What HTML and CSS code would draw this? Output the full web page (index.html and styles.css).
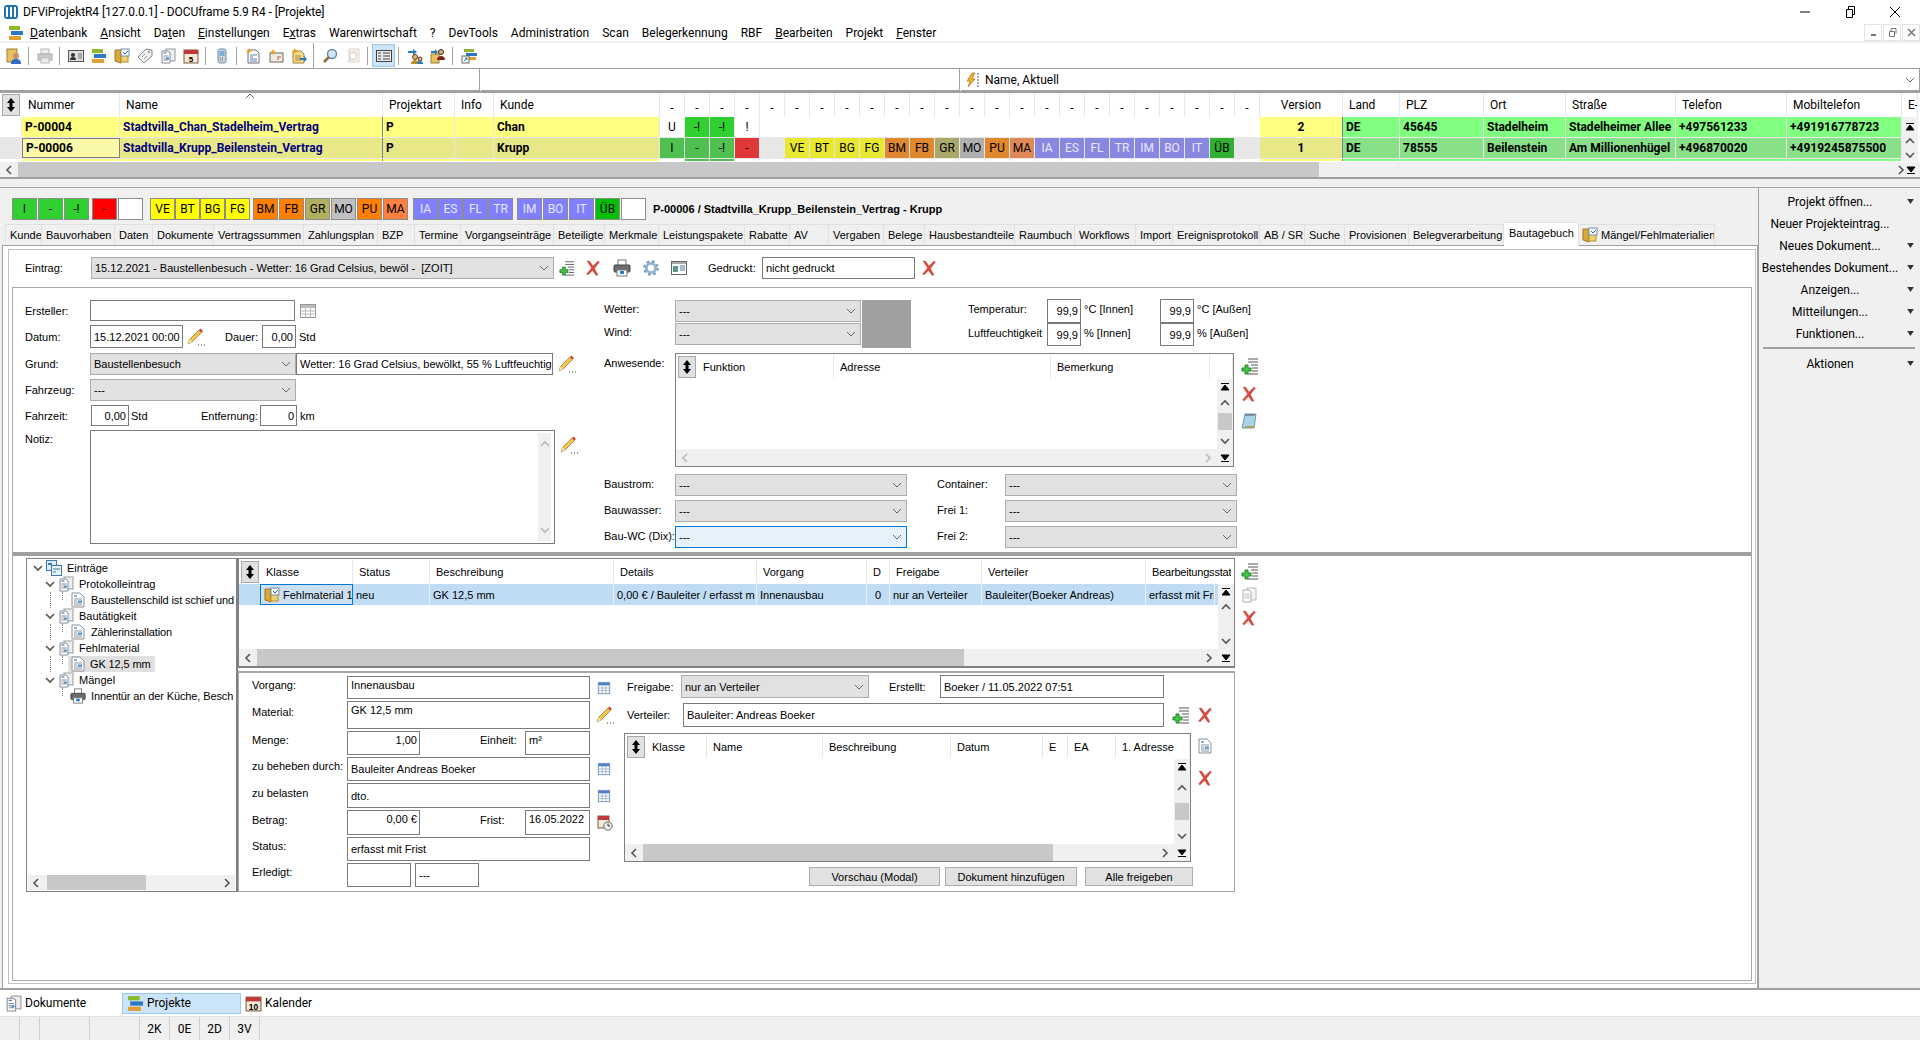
FILE: index.html
```html
<!DOCTYPE html>
<html lang="de">
<head>
<meta charset="UTF-8">
<title>DFViProjektR4 - DOCUframe 5.9 R4</title>
<link rel="stylesheet" href="styles.css">
</head>
<body>
<svg class="defs" xmlns="http://www.w3.org/2000/svg">
  <symbol id="i-app" viewBox="0 0 16 16"><rect x="1" y="1" width="14" height="14" rx="3" fill="#1f6fb5"/><path d="M4 3v10M8 3v10M12 3v10" stroke="#fff" stroke-width="2"/></symbol>
  <symbol id="i-projects" viewBox="0 0 16 16"><rect x="1" y="1" width="11" height="4" fill="#8cb82c"/><rect x="3" y="6" width="12" height="4" fill="#2a78c0"/><rect x="1" y="11" width="12" height="4" fill="#e0a030"/></symbol>
  <symbol id="i-projarrow" viewBox="0 0 16 16"><rect x="3" y="1" width="10" height="3" fill="#8cb82c"/><rect x="5" y="5" width="11" height="3" fill="#2a78c0"/><rect x="7" y="9" width="8" height="3" fill="#e0a030"/><rect x="1" y="8" width="7" height="7" fill="#fff" stroke="#666"/><path d="M3 13l3-3M4 10h2v2" stroke="#2a78c0" fill="none"/></symbol>
  <symbol id="i-userdoc" viewBox="0 0 16 16"><rect x="1" y="1" width="10" height="13" fill="#e8c060" stroke="#a08040"/><circle cx="10" cy="8" r="3" fill="#c89070"/><path d="M5 16c0-4 2-5 5-5s5 1 5 5z" fill="#3070c0"/></symbol>
  <symbol id="i-print-off" viewBox="0 0 16 16"><rect x="4" y="1" width="8" height="5" fill="#eee" stroke="#bbb"/><rect x="1" y="6" width="14" height="6" fill="#ccc" stroke="#aaa"/><rect x="4" y="10" width="8" height="5" fill="#eee" stroke="#bbb"/></symbol>
  <symbol id="i-card" viewBox="0 0 16 16"><rect x=".5" y="2.500" width="15" height="11" fill="#ddd" stroke="#555"/><circle cx="5" cy="7" r="2" fill="#333"/><path d="M2 12c0-2 1-3 3-3s3 1 3 3z" fill="#333"/><path d="M10 6h4M10 8h4M10 10h4" stroke="#777"/></symbol>
  <symbol id="i-folder" viewBox="0 0 16 16"><path d="M1 2h6v13l-6-2z" fill="#d8a838" stroke="#a07820"/><rect x="7" y="3" width="7" height="11" fill="#f0d070" stroke="#b89030"/><rect x="7" y="1" width="8" height="7" fill="#fff" stroke="#7090b0"/><path d="M9 4l2 2 3-3" stroke="#2060c0" fill="none"/></symbol>
  <symbol id="i-tag" viewBox="0 0 16 16"><path d="M1 9l8-8 6 1 0 6-8 7z" fill="#eee" stroke="#888"/><circle cx="12" cy="4" r="1" fill="#888"/><path d="M5 9l3-3M7 11l3-3" stroke="#999"/></symbol>
  <symbol id="i-docs" viewBox="0 0 16 16"><rect x="6" y="1" width="9" height="12" fill="#eee" stroke="#999"/><path d="M2 3h6l2 2v10H2z" fill="#fff" stroke="#889"/><path d="M3.500 5h3" stroke="#26a"/><path d="M3.500 8h5M3.500 10h2M3.500 12h5" stroke="#889"/><rect x="6" y="9.500" width="3" height="2" fill="#4a90d0"/></symbol>
  <symbol id="i-doc" viewBox="0 0 16 16"><path d="M2 1h8l4 4v10H2z" fill="#fff" stroke="#8a8f98"/><path d="M4 4h3" stroke="#26a"/><path d="M4 7h8M4 9h3M4 11h8M4 13h8" stroke="#8a95a0"/><rect x="8" y="8.500" width="4" height="2" fill="#4a90d0"/></symbol>
  <symbol id="i-docs-off" viewBox="0 0 16 16"><rect x="6" y="1" width="9" height="12" fill="#f4f4f4" stroke="#bbb"/><path d="M2 3h6l2 2v10H2z" fill="#fff" stroke="#aaa"/><path d="M3.500 7h5M3.500 9h5M3.500 11h5" stroke="#bbb"/></symbol>
  <symbol id="i-cal" viewBox="0 0 16 16"><rect x="1" y="2" width="14" height="13" fill="#f4ead8" stroke="#7a5a38"/><rect x="1" y="2" width="14" height="4" fill="#c0383a"/><text x="8" y="14" font-size="8" font-weight="700" text-anchor="middle" font-family="Liberation Sans">5</text></symbol>
  <symbol id="i-cal10" viewBox="0 0 16 16"><rect x="1" y="2" width="14" height="13" fill="#f4ead8" stroke="#7a5a38"/><rect x="1" y="2" width="14" height="4" fill="#c0383a"/><text x="8" y="14" font-size="8" font-weight="700" text-anchor="middle" font-family="Liberation Sans">10</text></symbol>
  <symbol id="i-phone" viewBox="0 0 16 16"><rect x="4" y="1" width="8" height="14" rx="2" fill="#c8d4e0" stroke="#7a8a9a"/><rect x="5.500" y="3" width="5" height="5" fill="#7ab0e0"/><path d="M6 10h4M6 12h4" stroke="#667" stroke-dasharray="1 1"/></symbol>
  <symbol id="i-docstar" viewBox="0 0 16 16"><path d="M3 2h8l3 3v10H3z" fill="#fff" stroke="#6a6f78"/><path d="M5 7h7M5 9h3M5 11h7M5 13h7" stroke="#5a85b0"/><path d="M4 0l1 2 2 1-2 1-1 2-1-2-2-1 2-1z" fill="#f0a020"/></symbol>
  <symbol id="i-mailstar" viewBox="0 0 16 16"><rect x="2" y="5" width="13" height="9" fill="#f0ece0" stroke="#6a6a60"/><path d="M9 9h4M9 11h2" stroke="#c05050"/><path d="M5 1l1 2 2 1-2 1-1 2-1-2-2-1 2-1z" fill="#f0a020"/></symbol>
  <symbol id="i-notestar" viewBox="0 0 16 16"><path d="M2 3h8l3 3v9H2z" fill="#f8e090" stroke="#a08030"/><path d="M4 8h6M4 10h6M4 12h6" stroke="#a08030"/><path d="M9 10h4V8l3 3-3 3v-2H9z" fill="#2a78c0"/><path d="M4 0l1 2 2 1-2 1-1 2-1-2-2-1 2-1z" fill="#f0a020"/></symbol>
  <symbol id="i-search" viewBox="0 0 16 16"><circle cx="10" cy="6" r="4.500" fill="#cfe4f7" stroke="#6a8aa8" stroke-width="1.500"/><path d="M7 9l-5 5" stroke="#8a6a3a" stroke-width="2.500"/></symbol>
  <symbol id="i-search-off" viewBox="0 0 16 16"><rect x="4" y="1" width="10" height="13" fill="#f6eedd" stroke="#e0d8c8"/><circle cx="8" cy="8" r="3.500" fill="#fff" stroke="#ccc"/><path d="M6 11l-3 3" stroke="#ddd" stroke-width="2"/></symbol>
  <symbol id="i-window" viewBox="0 0 16 16"><rect x=".5" y="1.500" width="15" height="13" fill="#fff" stroke="#666"/><rect x="1" y="2" width="14" height="2" fill="#aaa"/><rect x="2" y="6" width="5" height="6" fill="#5a9a8a"/><path d="M9 6h5M9 8h5M9 10h5" stroke="#4a7aa0"/></symbol>
  <symbol id="i-form" viewBox="0 0 16 16"><rect x=".5" y="2.500" width="15" height="11" fill="#e8e8e8" stroke="#444"/><path d="M2 5h3M2 8h3M2 11h3" stroke="#444"/><path d="M7 5h7M7 8h7M7 11h7" stroke="#444"/></symbol>
  <symbol id="i-users" viewBox="0 0 16 16"><path d="M1 3h5V1l4 3-4 3V5H1z" fill="#2a78c0"/><circle cx="8" cy="9" r="2.500" fill="#e0b080" stroke="#604020"/><path d="M4 16c0-3 2-4 4-4s4 1 4 4z" fill="#c09030"/><circle cx="13" cy="11" r="2" fill="#e0b080" stroke="#604020"/><path d="M10 16c0-2 1-3 3-3s3 1 3 3z" fill="#2a78c0"/></symbol>
  <symbol id="i-users2" viewBox="0 0 16 16"><rect x="1" y="6" width="8" height="9" fill="#e8c060" stroke="#a08030"/><path d="M1 3h4V1l3 3-3 3V5H1z" fill="#2a78c0"/><circle cx="11" cy="4" r="2.500" fill="#e0b080" stroke="#402010"/><path d="M7 12c0-3 2-4 4-4s4 1 4 4z" fill="#802020"/></symbol>
  <symbol id="i-plist" viewBox="0 0 18 18"><path d="M7 2h10M7 5h10M10 8h7M11 11h6M11 14h6M7 17h10" stroke="#555"/><path d="M4 8h3v3h3v3H7v3H4v-3H1v-3h3z" fill="#4cc04c" stroke="#1c8a1c"/></symbol>
  <symbol id="i-x" viewBox="0 0 16 16"><path d="M2 1h2.500L8 6l5-5 1.500 1-5 6.500L13 15l-2 .5-3.500-5L3 15l-1.500-1 5-6z" fill="#d8483c" stroke="#b84038" stroke-width=".3"/></symbol>
  <symbol id="i-print" viewBox="0 0 18 18"><rect x="5" y="1" width="8" height="6" fill="#fff" stroke="#777"/><rect x="1" y="6" width="16" height="7" rx="1" fill="#6c6c70" stroke="#444"/><rect x="4" y="11" width="10" height="6" fill="#fff" stroke="#777"/><rect x="7" y="12" width="4" height="3" fill="#3080c0"/></symbol>
  <symbol id="i-gear" viewBox="0 0 16 16"><circle cx="8" cy="8" r="6.300" fill="none" stroke="#7898b8" stroke-width="3" stroke-dasharray="2.500 2.450"/><circle cx="8" cy="8" r="4.600" fill="none" stroke="#94b4d0" stroke-width="2.800"/><circle cx="8" cy="8" r="2.200" fill="#fff"/></symbol>
  <symbol id="i-pencil" viewBox="0 0 18 18"><path d="M1 16l1.500-4.500L12 2l2.500 2.500L5 14z" fill="#f0c850" stroke="#8a6a20" stroke-width=".7"/><path d="M12 2l2.500 2.500L16 3l-2.500-2.500z" fill="#d04040"/><path d="M1 16l1.500-4.500L5 14z" fill="#f4e4c0"/><path d="M11 17h1M14 17h1M17 17h1" stroke="#333"/></symbol>
  <symbol id="i-grid" viewBox="0 0 16 16"><rect x=".5" y="1.500" width="15" height="13" fill="#fff" stroke="#999"/><rect x="1" y="2" width="14" height="3" fill="#bbb"/><path d="M1 8h14M1 11h14M5.500 5v9M10.500 5v9" stroke="#bbb"/></symbol>
  <symbol id="i-gridb" viewBox="0 0 16 16"><rect x="1.500" y="1.500" width="13" height="13" fill="#fff" stroke="#6a8ab0"/><rect x="2" y="2" width="12" height="3" fill="#4a80c8"/><path d="M2 8h12M2 11h12M6 5v9M10 5v9" stroke="#9ab4d0"/></symbol>
  <symbol id="i-calclock" viewBox="0 0 16 16"><rect x="1" y="1" width="11" height="12" fill="#f4ead8" stroke="#7a5a38"/><rect x="1" y="1" width="11" height="4" fill="#c0383a"/><circle cx="11" cy="11" r="4.200" fill="#eee" stroke="#666"/><path d="M11 8.500V11h2" stroke="#333" fill="none"/></symbol>
  <symbol id="i-note" viewBox="0 0 16 16"><path d="M4 1h11l-2 14H1z" fill="#a8d4e8" stroke="#6a9ab0"/><path d="M5 1v2M7 1v2M9 1v2M11 1v2M13 1v2" stroke="#556"/><path d="M4 14h9" stroke="#b0a060" stroke-width="2"/></symbol>
  <symbol id="i-root" viewBox="0 0 16 16"><rect x=".5" y=".5" width="10" height="10" fill="#dce8f4" stroke="#3a7ab0"/><rect x="5.500" y="5.500" width="10" height="10" fill="#e8f0f8" stroke="#3a7ab0"/><path d="M7 9h7M7 12h3" stroke="#3a7ab0"/><rect x="2" y="3" width="4" height="2" fill="#3a7ab0"/></symbol>
  <symbol id="i-sort" viewBox="0 0 10 14"><path d="M5 0l4 5H6.500v4H9l-4 5-4-5h2.500V5H1z" fill="#000"/></symbol>
  <symbol id="i-first" viewBox="0 0 10 10"><path d="M1 1.500h8M5 3l4 5H1z" stroke="#000" stroke-width="1"/></symbol>
  <symbol id="i-last" viewBox="0 0 10 10"><path d="M1 8.500h8M5 7L1 2h8z" stroke="#000" stroke-width="1"/></symbol>
  <symbol id="i-cdown" viewBox="0 0 10 6"><path d="M1 1l4 4 4-4" fill="none" stroke="#666" stroke-width="1"/></symbol>
  <symbol id="i-sup" viewBox="0 0 10 10"><path d="M1 7l4-4 4 4" fill="none" stroke="#555" stroke-width="1.600"/></symbol>
  <symbol id="i-sdown" viewBox="0 0 10 10"><path d="M1 3l4 4 4-4" fill="none" stroke="#555" stroke-width="1.600"/></symbol>
  <symbol id="i-sleft" viewBox="0 0 10 10"><path d="M7 1L3 5l4 4" fill="none" stroke="#555" stroke-width="1.600"/></symbol>
  <symbol id="i-sright" viewBox="0 0 10 10"><path d="M3 1l4 4-4 4" fill="none" stroke="#555" stroke-width="1.600"/></symbol>
  <symbol id="i-tri" viewBox="0 0 8 6"><path d="M0 0h8L4 6z" fill="#333"/></symbol>
  <symbol id="i-bolt" viewBox="0 0 16 16"><path d="M8 1L3 9h3l-2 6 7-8H8l3-6z" fill="#f0b030" stroke="#b06010" stroke-width=".6"/><path d="M13 2h2M13 5h2M13 8h2M13 11h2M13 14h2" stroke="#555"/></symbol>
</svg>

<header class="titlebar">
  <svg class="ico16"><use href="#i-app"/></svg>
  <span class="titlebar-text">DFViProjektR4 [127.0.0.1] - DOCUframe 5.9 R4 - [Projekte]</span>
  <div class="winbtns">
    <svg width="12" height="12" viewBox="0 0 12 12"><path d="M1 6h10" stroke="#000"/></svg>
    <svg width="12" height="12" viewBox="0 0 12 12"><path d="M2.500 3.500h6v8h-6zM4.500 3V.500h6v8H9" fill="none" stroke="#000"/></svg>
    <svg width="12" height="12" viewBox="0 0 12 12"><path d="M1 1l10 10M11 1L1 11" stroke="#000"/></svg>
  </div>
</header>

<nav class="menubar">
  <svg class="ico16"><use href="#i-projects"/></svg>
  <div class="menu-items">
    <span><u>D</u>atenbank</span><span><u>A</u>nsicht</span><span>Da<u>t</u>en</span><span><u>E</u>instellungen</span><span>E<u>x</u>tras</span><span>Warenwirtschaft</span><span>?</span><span>DevTools</span><span>Administration</span><span>Scan</span><span>Belegerkennung</span><span>RBF</span><span><u>B</u>earbeiten</span><span>Pro<u>j</u>ekt</span><span><u>F</u>enster</span>
  </div>
  <div class="mdibtns">
    <span class="mdibtn"><svg width="9" height="9" viewBox="0 0 9 9"><path d="M2 7h5" stroke="#777" stroke-width="2"/></svg></span>
    <span class="mdibtn"><svg width="9" height="9" viewBox="0 0 9 9"><path d="M1.500 3.500h5v5h-5zM3 3V.500h5v5" fill="none" stroke="#777"/></svg></span>
    <span class="mdibtn"><svg width="9" height="9" viewBox="0 0 9 9"><path d="M1 1l7 7M8 1L1 8" stroke="#777" stroke-width="1.500"/></svg></span>
  </div>
</nav>

<div class="toolbar">
  <span class="tb"><svg class="ico16"><use href="#i-userdoc"/></svg></span><i class="tsep"></i>
  <span class="tb"><svg class="ico16"><use href="#i-print-off"/></svg></span><i class="tsep"></i>
  <span class="tb"><svg class="ico16"><use href="#i-card"/></svg></span>
  <span class="tb"><svg class="ico16"><use href="#i-projects"/></svg></span>
  <span class="tb"><svg class="ico16"><use href="#i-folder"/></svg></span>
  <span class="tb"><svg class="ico16"><use href="#i-tag"/></svg></span>
  <span class="tb"><svg class="ico16"><use href="#i-docs"/></svg></span>
  <span class="tb"><svg class="ico16"><use href="#i-cal"/></svg></span><i class="tsep"></i>
  <span class="tb"><svg class="ico16"><use href="#i-phone"/></svg></span><i class="tsep"></i>
  <span class="tb"><svg class="ico16"><use href="#i-docstar"/></svg></span>
  <span class="tb"><svg class="ico16"><use href="#i-mailstar"/></svg></span>
  <span class="tb"><svg class="ico16"><use href="#i-notestar"/></svg></span><i class="tsep tall"></i>
  <span class="tb"><svg class="ico16"><use href="#i-search"/></svg></span>
  <span class="tb"><svg class="ico16"><use href="#i-search-off"/></svg></span><i class="tsep"></i>
  <span class="tb on"><svg class="ico16"><use href="#i-form"/></svg></span><i class="tsep"></i>
  <span class="tb"><svg class="ico16"><use href="#i-users"/></svg></span>
  <span class="tb"><svg class="ico16"><use href="#i-users2"/></svg></span><i class="tsep"></i>
  <span class="tb"><svg class="ico16"><use href="#i-projarrow"/></svg></span>
</div>

<div class="filters">
  <div class="filter f1"></div>
  <div class="filter f2"></div>
  <div class="filter f3">
    <svg class="ico16"><use href="#i-bolt"/></svg>
    <span>Name, Aktuell</span>
    <svg class="chev"><use href="#i-cdown"/></svg>
  </div>
</div>

<!-- Projektliste -->
<section class="plist">
  <div class="prow phead">
    <div class="pc"><button class="sortbtn"><svg width="10" height="14"><use href="#i-sort"/></svg></button></div>
    <div class="pc">Nummer</div>
    <div class="pc sorted">Name<svg class="sortmark" width="10" height="6" viewBox="0 0 10 6"><path d="M1 5l4-4 4 4" fill="none" stroke="#666"/></svg></div>
    <div class="pc">Projektart</div><div class="pc">Info</div><div class="pc">Kunde</div>
    <div class="pc d">-</div><div class="pc d">-</div><div class="pc d">-</div><div class="pc d">-</div><div class="pc d">-</div><div class="pc d">-</div>
    <div class="pc d">-</div><div class="pc d">-</div><div class="pc d">-</div><div class="pc d">-</div><div class="pc d">-</div><div class="pc d">-</div>
    <div class="pc d">-</div><div class="pc d">-</div><div class="pc d">-</div><div class="pc d">-</div><div class="pc d">-</div><div class="pc d">-</div>
    <div class="pc d">-</div><div class="pc d">-</div><div class="pc d">-</div><div class="pc d">-</div><div class="pc d">-</div><div class="pc d">-</div>
    <div class="pc mid">Version</div><div class="pc">Land</div><div class="pc">PLZ</div><div class="pc">Ort</div><div class="pc">Straße</div><div class="pc">Telefon</div><div class="pc">Mobiltelefon</div><div class="pc">E-</div>
  </div>
  <div class="plist-body">
    <div class="plist-rows">
      <div class="prow pdata">
        <div class="pc"></div>
        <div class="pc yel">P-00004</div><div class="pc yel navy line-r">Stadtvilla_Chan_Stadelheim_Vertrag</div><div class="pc yel">P</div><div class="pc yel"></div><div class="pc yel">Chan</div>
        <div class="pc st">U</div><div class="pc st s-g2">-!</div><div class="pc st s-g2">-!</div><div class="pc st">!</div>
        <div class="pc st"></div><div class="pc st"></div><div class="pc st"></div><div class="pc st"></div><div class="pc st"></div><div class="pc st"></div><div class="pc st"></div><div class="pc st"></div><div class="pc st"></div><div class="pc st"></div><div class="pc st"></div><div class="pc st"></div><div class="pc st"></div><div class="pc st"></div><div class="pc st"></div><div class="pc st"></div><div class="pc st"></div><div class="pc st"></div><div class="pc st"></div><div class="pc st"></div>
        <div class="pc yel mid line-r">2</div><div class="pc grn">DE</div><div class="pc grn">45645</div><div class="pc grn">Stadelheim</div><div class="pc grn">Stadelheimer Allee</div><div class="pc grn">+497561233</div><div class="pc grn">+491916778723</div>
      </div>
      <div class="prow pdata cur">
        <div class="pc rh"></div>
        <div class="pc focus">P-00006</div><div class="pc yel navy line-r">Stadtvilla_Krupp_Beilenstein_Vertrag</div><div class="pc yel">P</div><div class="pc yel"></div><div class="pc yel">Krupp</div>
        <div class="pc st s-g">I</div><div class="pc st s-g">-</div><div class="pc st s-g">-!</div><div class="pc st s-r">-</div><div class="pc st s-e"></div>
        <div class="pc st t-y">VE</div><div class="pc st t-y">BT</div><div class="pc st t-y">BG</div><div class="pc st t-y">FG</div><div class="pc st t-o">BM</div><div class="pc st t-o">FB</div><div class="pc st t-k">GR</div><div class="pc st t-s">MO</div><div class="pc st t-o">PU</div><div class="pc st t-m">MA</div><div class="pc st t-b">IA</div><div class="pc st t-b">ES</div><div class="pc st t-b">FL</div><div class="pc st t-b">TR</div><div class="pc st t-b">IM</div><div class="pc st t-b">BO</div><div class="pc st t-b">IT</div><div class="pc st t-u">ÜB</div><div class="pc st s-e"></div>
        <div class="pc yel mid line-r">1</div><div class="pc grn">DE</div><div class="pc grn">78555</div><div class="pc grn">Beilenstein</div><div class="pc grn">Am Millionenhügel</div><div class="pc grn">+496870020</div><div class="pc grn">+4919245875500</div>
      </div>
      <div class="prow psliver">
        <div class="pc"></div><div class="pc yel"></div><div class="pc yel line-r"></div><div class="pc yel"></div><div class="pc yel"></div><div class="pc yel"></div>
        <div class="pc"></div><div class="pc s-g"></div><div class="pc s-g"></div><div class="pc"></div>
        <div class="pc"></div><div class="pc"></div><div class="pc"></div><div class="pc"></div><div class="pc"></div><div class="pc"></div><div class="pc"></div><div class="pc"></div><div class="pc"></div><div class="pc"></div><div class="pc"></div><div class="pc"></div><div class="pc"></div><div class="pc"></div><div class="pc"></div><div class="pc"></div><div class="pc"></div><div class="pc"></div><div class="pc"></div><div class="pc"></div>
        <div class="pc yel line-r"></div><div class="pc grn"></div><div class="pc grn"></div><div class="pc grn"></div><div class="pc grn"></div><div class="pc grn"></div><div class="pc grn"></div>
      </div>
    </div>
    <div class="plist-vs">
      <svg class="sico"><use href="#i-first"/></svg>
      <svg class="sico"><use href="#i-sup"/></svg>
      <svg class="sico"><use href="#i-sdown"/></svg>
    </div>
  </div>
  <div class="hscroll plist-hs">
    <svg class="sico"><use href="#i-sleft"/></svg>
    <div class="track"><i class="thumb th-p"></i></div>
    <svg class="sico"><use href="#i-sright"/></svg>
    <svg class="sico"><use href="#i-last"/></svg>
  </div>
</section>
<div class="gap-strip"></div>

<div class="workspace">
  <main class="content">
    <div class="tagbar">
      <div class="tags g1"><span class="tag c-g">I</span><span class="tag c-g">-</span><span class="tag c-g">-!</span></div>
      <div class="tags g1 m3"><span class="tag c-r">-</span><span class="tag"></span></div>
      <div class="tags m7"><span class="tag c-y">VE</span><span class="tag c-y">BT</span><span class="tag c-y">BG</span><span class="tag c-y">FG</span></div>
      <div class="tags g1 m3"><span class="tag c-o">BM</span><span class="tag c-o">FB</span><span class="tag c-k">GR</span><span class="tag c-s">MO</span><span class="tag c-o">PU</span><span class="tag c-m">MA</span></div>
      <div class="tags m5"><span class="tag c-b">IA</span><span class="tag c-b">ES</span><span class="tag c-b">FL</span><span class="tag c-b">TR</span></div>
      <div class="tags g1 m4"><span class="tag c-b">IM</span><span class="tag c-b">BO</span><span class="tag c-b">IT</span><span class="tag c-u">ÜB</span><span class="tag"></span></div>
      <b class="proj-title">P-00006 / Stadtvilla_Krupp_Beilenstein_Vertrag - Krupp</b>
    </div>

    <div class="tabs">
      <span class="tab">Kunde</span><span class="tab">Bauvorhaben</span><span class="tab">Daten</span><span class="tab">Dokumente</span><span class="tab">Vertragssummen</span><span class="tab">Zahlungsplan</span><span class="tab">BZP</span><span class="tab">Termine</span><span class="tab">Vorgangseinträge</span><span class="tab">Beteiligte</span><span class="tab">Merkmale</span><span class="tab">Leistungspakete</span><span class="tab">Rabatte</span><span class="tab">AV</span><span class="tab">Vergaben</span><span class="tab">Belege</span><span class="tab">Hausbestandteile</span><span class="tab">Raumbuch</span><span class="tab">Workflows</span><span class="tab">Import</span><span class="tab">Ereignisprotokoll</span><span class="tab">AB / SR</span><span class="tab">Suche</span><span class="tab">Provisionen</span><span class="tab">Belegverarbeitung</span><span class="tab active">Bautagebuch</span><span class="tab tab-icon"><svg class="ico16"><use href="#i-folder"/></svg>Mängel/Fehlmaterialien</span>
    </div>

    <div class="tabpane">
      <div class="page">
        <div class="entry-row">
          <label class="lb w-66">Eintrag:</label>
          <div class="sel w-463"><span>15.12.2021 - Baustellenbesuch - Wetter: 16 Grad Celsius, bewöl -&nbsp; [ZOIT]</span><svg class="chev"><use href="#i-cdown"/></svg></div>
          <svg class="ico16 ml-5"><use href="#i-plist"/></svg>
          <svg class="ico16 ml-10"><use href="#i-x"/></svg>
          <svg class="ico18 ml-12"><use href="#i-print"/></svg>
          <svg class="ico16 ml-12"><use href="#i-gear"/></svg>
          <svg class="ico16 ml-12"><use href="#i-window"/></svg>
          <label class="lb w-54 ml-21">Gedruckt:</label>
          <div class="tf w-153">nicht gedruckt</div>
          <svg class="ico16 ml-6"><use href="#i-x"/></svg>
        </div>

        <div class="inner">
          <div class="top-form">
            <!-- linke Spalte -->
            <div class="col-left">
              <div class="frow h21"><label class="lb w-65">Ersteller:</label><div class="tf w-205"></div><svg class="ico16 ml-5"><use href="#i-grid"/></svg></div>
              <div class="frow h23"><label class="lb w-65">Datum:</label><div class="tf w-93">15.12.2021 00:00</div><svg class="ico18 ml-4"><use href="#i-pencil"/></svg><label class="lb w-37 ml-20">Dauer:</label><div class="tf w-34 right">0,00</div><span class="lb ml-3">Std</span></div>
              <div class="frow h22 mt-5"><label class="lb w-65">Grund:</label><div class="sel w-206"><span>Baustellenbesuch</span><svg class="chev"><use href="#i-cdown"/></svg></div><div class="tf w-257">Wetter: 16 Grad Celsius, bewölkt, 55 % Luftfeuchtig</div><svg class="ico18 ml-5"><use href="#i-pencil"/></svg></div>
              <div class="frow h22"><label class="lb w-65">Fahrzeug:</label><div class="sel w-206"><span>---</span><svg class="chev"><use href="#i-cdown"/></svg></div></div>
              <div class="frow h21"><label class="lb w-66">Fahrzeit:</label><div class="tf w-38 right">0,00</div><span class="lb w-70 ml-2">Std</span><label class="lb w-59">Entfernung:</label><div class="tf w-37 right">0</div><span class="lb ml-3">km</span></div>
              <div class="frow h114 notiz"><label class="lb w-65">Notiz:</label>
                <div class="tf w-465 area"><div class="area-vs"><svg class="sico dim"><use href="#i-sup"/></svg><svg class="sico dim"><use href="#i-sdown"/></svg></div></div>
                <svg class="ico18 ml-5 pencil-top"><use href="#i-pencil"/></svg>
              </div>
            </div>

            <!-- rechte Spalte -->
            <div class="col-right">
              <div class="wx-row">
                <div class="wx-grid">
                  <label class="lb">Wetter:</label><div class="sel"><span>---</span><svg class="chev"><use href="#i-cdown"/></svg></div>
                  <div class="wx-box"></div>
                  <label class="lb">Wind:</label><div class="sel"><span>---</span><svg class="chev"><use href="#i-cdown"/></svg></div>
                </div>
                <div class="climate">
                  <label class="lb">Temperatur:</label><div class="tf right">99,9</div><span class="lb">°C [Innen]</span><div class="tf right">99,9</div><span class="lb">°C [Außen]</span>
                  <label class="lb">Luftfeuchtigkeit</label><div class="tf right">99,9</div><span class="lb">% [Innen]</span><div class="tf right">99,9</div><span class="lb">% [Außen]</span>
                </div>
              </div>

              <div class="anw-row">
                <label class="lb w-71 anw-label">Anwesende:</label>
                <div class="dg dg-anw">
                  <div class="dg-head hd-anw">
                    <div class="hc"><button class="sortbtn"><svg width="10" height="14"><use href="#i-sort"/></svg></button><span>Funktion</span></div>
                    <div class="hc">Adresse</div><div class="hc">Bemerkung</div><div class="hc"></div>
                  </div>
                  <div class="dg-body"></div>
                  <div class="vscroll">
                    <svg class="sico"><use href="#i-first"/></svg>
                    <svg class="sico"><use href="#i-sup"/></svg>
                    <i class="vthumb"></i>
                    <svg class="sico"><use href="#i-sdown"/></svg>
                  </div>
                  <div class="hscroll">
                    <svg class="sico dim"><use href="#i-sleft"/></svg>
                    <div class="track"></div>
                    <svg class="sico dim"><use href="#i-sright"/></svg>
                  </div>
                  <div class="corner"><svg class="sico"><use href="#i-last"/></svg></div>
                </div>
                <div class="side-icons si-anw">
                  <svg class="ico18"><use href="#i-plist"/></svg>
                  <svg class="ico16"><use href="#i-x"/></svg>
                  <svg class="ico16"><use href="#i-note"/></svg>
                </div>
              </div>

              <div class="site-grid">
                <label class="lb">Baustrom:</label><div class="sel"><span>---</span><svg class="chev"><use href="#i-cdown"/></svg></div><i></i>
                <label class="lb">Container:</label><div class="sel"><span>---</span><svg class="chev"><use href="#i-cdown"/></svg></div>
                <label class="lb">Bauwasser:</label><div class="sel"><span>---</span><svg class="chev"><use href="#i-cdown"/></svg></div><i></i>
                <label class="lb">Frei 1:</label><div class="sel"><span>---</span><svg class="chev"><use href="#i-cdown"/></svg></div>
                <label class="lb">Bau-WC (Dix):</label><div class="sel focus-sel"><span>---</span><svg class="chev"><use href="#i-cdown"/></svg></div><i></i>
                <label class="lb">Frei 2:</label><div class="sel"><span>---</span><svg class="chev"><use href="#i-cdown"/></svg></div>
              </div>
            </div>
          </div>

          <div class="splitter"></div>

          <div class="lower">
            <div class="tree">
              <div class="tree-rows">
                <div class="tr l0"><svg class="tw"><use href="#i-sdown"/></svg><svg class="ico16"><use href="#i-root"/></svg><span>Einträge</span></div>
                <div class="tr l1"><svg class="tw"><use href="#i-sdown"/></svg><svg class="ico16"><use href="#i-docs"/></svg><span>Protokolleintrag</span></div>
                <div class="tr l2"><i class="vl"></i><i class="hd"></i><svg class="ico16"><use href="#i-doc"/></svg><span>Baustellenschild ist schief und</span></div>
                <div class="tr l1"><svg class="tw"><use href="#i-sdown"/></svg><svg class="ico16"><use href="#i-docs"/></svg><span>Bautätigkeit</span></div>
                <div class="tr l2"><i class="vl"></i><i class="hd"></i><svg class="ico16"><use href="#i-doc"/></svg><span>Zählerinstallation</span></div>
                <div class="tr l1"><svg class="tw"><use href="#i-sdown"/></svg><svg class="ico16"><use href="#i-docs"/></svg><span>Fehlmaterial</span></div>
                <div class="tr l2"><i class="vl"></i><i class="hd"></i><span class="tree-sel"><svg class="ico16"><use href="#i-doc"/></svg><span>GK 12,5 mm</span></span></div>
                <div class="tr l1"><svg class="tw"><use href="#i-sdown"/></svg><svg class="ico16"><use href="#i-docs"/></svg><span>Mängel</span></div>
                <div class="tr l2 no-vl"><i class="vl"></i><i class="hd"></i><svg class="ico16"><use href="#i-print"/></svg><span>Innentür an der Küche, Besch</span></div>
              </div>
              <div class="hscroll tree-hs">
                <svg class="sico"><use href="#i-sleft"/></svg>
                <div class="track"><i class="thumb th-t"></i></div>
                <svg class="sico"><use href="#i-sright"/></svg>
              </div>
            </div>

            <div class="lower-main">
              <div class="dg dg-items">
                <div class="dg-head hd-items">
                  <div class="hc"><button class="sortbtn"><svg width="10" height="14"><use href="#i-sort"/></svg></button><span>Klasse</span></div>
                  <div class="hc">Status</div><div class="hc">Beschreibung</div><div class="hc">Details</div><div class="hc">Vorgang</div><div class="hc">D</div><div class="hc">Freigabe</div><div class="hc">Verteiler</div><div class="hc hc-tight">Bearbeitungsstat</div>
                </div>
                <div class="dg-body">
                  <div class="item-row hd-items">
                    <div class="ic klasse"><svg class="ico16"><use href="#i-folder"/></svg><span>Fehlmaterial 1</span></div>
                    <div class="ic">neu</div><div class="ic">GK 12,5 mm</div><div class="ic">0,00 € / Bauleiter / erfasst m</div><div class="ic">Innenausbau</div><div class="ic mid">0</div><div class="ic">nur an Verteiler</div><div class="ic">Bauleiter(Boeker Andreas)</div><div class="ic">erfasst mit Fri</div>
                  </div>
                </div>
                <div class="vscroll">
                  <svg class="sico"><use href="#i-first"/></svg>
                  <svg class="sico"><use href="#i-sup"/></svg>
                  <i class="vspace"></i>
                  <svg class="sico"><use href="#i-sdown"/></svg>
                </div>
                <div class="hscroll">
                  <svg class="sico"><use href="#i-sleft"/></svg>
                  <div class="track"><i class="thumb th-i"></i></div>
                  <svg class="sico"><use href="#i-sright"/></svg>
                </div>
                <div class="corner"><svg class="sico"><use href="#i-last"/></svg></div>
              </div>

              <div class="detail">
                <div class="detail-form">
                  <label class="lb">Vorgang:</label><div class="tf span4 top">Innenausbau</div><svg class="ico-grid ic-col"><use href="#i-gridb"/></svg>
                  <label class="lb">Material:</label><div class="tf span4 top">GK 12,5 mm</div><svg class="ico18 ic-col pen-col"><use href="#i-pencil"/></svg>
                  <label class="lb">Menge:</label><div class="tf right top">1,00</div><i></i><label class="lb">Einheit:</label><div class="tf top">m²</div><i></i>
                  <label class="lb">zu beheben durch:</label><div class="tf span4">Bauleiter Andreas Boeker</div><svg class="ico-grid ic-col"><use href="#i-gridb"/></svg>
                  <label class="lb">zu belasten</label><div class="tf span4">dto.</div><svg class="ico-grid ic-col"><use href="#i-gridb"/></svg>
                  <label class="lb">Betrag:</label><div class="tf right top">0,00 €</div><i></i><label class="lb">Frist:</label><div class="tf top">16.05.2022</div><svg class="ico16 ic-col"><use href="#i-calclock"/></svg>
                  <label class="lb">Status:</label><div class="tf span4">erfasst mit Frist</div><i></i>
                  <label class="lb">Erledigt:</label><div class="erledigt"><div class="tf"></div><div class="tf">---</div></div><i></i>
                </div>
                <div class="detail-right">
                  <div class="dr-row h23">
                    <label class="lb w-54 ml-3">Freigabe:</label>
                    <div class="sel w-188"><span>nur an Verteiler</span><svg class="chev"><use href="#i-cdown"/></svg></div>
                    <label class="lb w-51 ml-20">Erstellt:</label>
                    <div class="tf w-224">Boeker / 11.05.2022 07:51</div>
                  </div>
                  <div class="dr-row h24 dr-verteiler">
                    <label class="lb w-56 ml-3">Verteiler:</label>
                    <div class="tf w-481">Bauleiter: Andreas Boeker</div>
                    <svg class="ico18 ml-8"><use href="#i-plist"/></svg>
                    <svg class="ico16 ml-7"><use href="#i-x"/></svg>
                  </div>
                  <div class="dr-table">
                    <div class="dg dg-docs">
                      <div class="dg-head hd-docs">
                        <div class="hc"><button class="sortbtn"><svg width="10" height="14"><use href="#i-sort"/></svg></button><span>Klasse</span></div>
                        <div class="hc">Name</div><div class="hc">Beschreibung</div><div class="hc">Datum</div><div class="hc">E</div><div class="hc">EA</div><div class="hc">1. Adresse</div>
                      </div>
                      <div class="dg-body"></div>
                      <div class="vscroll">
                        <svg class="sico"><use href="#i-first"/></svg>
                        <svg class="sico"><use href="#i-sup"/></svg>
                        <i class="vthumb"></i>
                        <svg class="sico"><use href="#i-sdown"/></svg>
                      </div>
                      <div class="hscroll">
                        <svg class="sico"><use href="#i-sleft"/></svg>
                        <div class="track"><i class="thumb th-d"></i></div>
                        <svg class="sico"><use href="#i-sright"/></svg>
                      </div>
                      <div class="corner"><svg class="sico"><use href="#i-last"/></svg></div>
                    </div>
                    <div class="side-icons si-docs">
                      <svg class="ico16"><use href="#i-doc"/></svg>
                      <svg class="ico16"><use href="#i-x"/></svg>
                    </div>
                  </div>
                  <div class="dr-buttons">
                    <button class="btn w-131">Vorschau (Modal)</button>
                    <button class="btn w-132">Dokument hinzufügen</button>
                    <button class="btn w-108">Alle freigeben</button>
                  </div>
                </div>
              </div>
            </div>

            <div class="side-icons si-items">
              <svg class="ico18"><use href="#i-plist"/></svg>
              <svg class="ico16"><use href="#i-docs-off"/></svg>
              <svg class="ico16"><use href="#i-x"/></svg>
            </div>
          </div>
        </div>
      </div>
    </div>
  </main>

  <aside class="actions">
    <div class="act"><span>Projekt öffnen...</span><svg class="tri"><use href="#i-tri"/></svg></div>
    <div class="act"><span>Neuer Projekteintrag...</span></div>
    <div class="act"><span>Neues Dokument...</span><svg class="tri"><use href="#i-tri"/></svg></div>
    <div class="act"><span>Bestehendes Dokument...</span><svg class="tri"><use href="#i-tri"/></svg></div>
    <div class="act"><span>Anzeigen...</span><svg class="tri"><use href="#i-tri"/></svg></div>
    <div class="act"><span>Mitteilungen...</span><svg class="tri"><use href="#i-tri"/></svg></div>
    <div class="act"><span>Funktionen...</span><svg class="tri"><use href="#i-tri"/></svg></div>
    <hr class="act-sep">
    <div class="act"><span>Aktionen</span><svg class="tri"><use href="#i-tri"/></svg></div>
  </aside>
</div>

<nav class="bottomnav">
  <div class="bn w-118"><svg><use href="#i-docs"/></svg>Dokumente</div>
  <div class="bn bn-on"><svg><use href="#i-projects"/></svg>Projekte</div>
  <div class="bn"><svg><use href="#i-cal10"/></svg>Kalender</div>
</nav>
<footer class="statusbar">
  <span class="sb w-s20"></span><span class="sb w-s50"></span><span class="sb w-s50"></span><span class="sb">2K</span><span class="sb">0E</span><span class="sb">2D</span><span class="sb">3V</span><span class="sb"></span>
</footer>
</body>
</html>
```

FILE: styles.css
```css
* {
  box-sizing: border-box;
  margin: 0;
  padding: 0;
}
body {
  width: 1920px;
  height: 1040px;
  overflow: hidden;
  display: flex;
  flex-direction: column;
  background: #fff;
  color: #000;
  font: 12px Roboto, "Liberation Sans", sans-serif;
}
.defs {
  display: none;
}
.ico16 { width: 16px; height: 16px; flex: none; }
.ico18 { width: 18px; height: 18px; flex: none; }
.ico-grid { width: 14px; height: 14px; flex: none; }

/* Fensterrahmen */
.titlebar {
  height: 24px;
  display: flex;
  align-items: center;
  padding-left: 3px;
  flex: none;
}
.titlebar-text {
  margin-left: 4px;
  letter-spacing: -.06px;
}
.winbtns {
  margin-left: auto;
  display: flex;
  gap: 33px;
  padding-right: 19px;
}
.menubar {
  height: 17px;
  flex: none;
  display: flex;
  align-items: center;
  padding-left: 8px;
}
.menu-items {
  display: flex;
  gap: 13px;
  margin-left: 6px;
}
.mdibtns {
  margin-left: auto;
  display: flex;
  gap: 1px;
}
.mdibtn {
  width: 18px;
  height: 17px;
  border: 1px solid #e4e4e4;
  display: flex;
  align-items: center;
  justify-content: center;
}
.toolbar {
  height: 27px;
  flex: none;
  border-top: 2px solid #f0f0f0;
  display: flex;
  align-items: center;
  padding-left: 2px;
}
.tb {
  width: 23px;
  height: 23px;
  display: flex;
  align-items: center;
  justify-content: center;
}
.tb.on {
  background: #cce4f7;
  border: 1px solid #99c9ef;
}
.tsep {
  width: 1px;
  height: 18px;
  background: #a0a0a0;
  margin: 0 4px 0 3px;
}
.tsep.tall {
  height: 25px;
}
.filters {
  height: 23px;
  flex: none;
  display: flex;
  gap: 1px;
  border-top: 1px solid #a0a0a0;
}
.filter {
  display: flex;
  align-items: center;
  gap: 2px;
  border-bottom: 1px solid #a0a0a0;
  border-right: 1px solid #a0a0a0;
  padding-left: 4px;
}
.f1 { width: 480px; }
.f2 { width: 479px; }
.f3 { flex: 1; gap: 5px; padding-left: 3px; }
.f3 .chev { margin-left: auto; margin-right: 4px; }
.chev {
  width: 10px;
  height: 6px;
  flex: none;
}

/* Projektliste */
.plist {
  height: 88px;
  flex: none;
  border-top: 2px solid #a0a0a0;
  border-bottom: 2px solid #a0a0a0;
  display: flex;
  flex-direction: column;
}
.prow {
  display: grid;
  grid-template-columns: 22px 98px 263px 72px 39px 166px repeat(24, 25px) 83px 57px 84px 82px 110px 111px 115px 16px;
}
.pc {
  overflow: hidden;
  white-space: nowrap;
  display: flex;
  align-items: center;
  padding-left: 3px;
  border-right: 1px solid #e8e8e8;
}
.phead {
  height: 24px;
}
.phead .pc {
  padding-left: 6px;
}
.phead .pc:first-child {
  padding: 0 0 0 2px;
  border: 0;
}
.phead .d {
  padding: 0 0 2px;
  justify-content: center;
  align-items: flex-end;
}
.pc.mid {
  justify-content: center;
  padding: 0;
}
.sorted {
  position: relative;
}
.sortmark {
  position: absolute;
  left: 125px;
  top: 0;
}
.sortbtn {
  width: 18px;
  height: 22px;
  border: 1px solid #a8a8a8;
  background: #e1e1e1;
  display: flex;
  align-items: center;
  justify-content: center;
  flex: none;
}
.plist-body {
  display: flex;
  height: 44px;
}
.plist-rows {
  width: 1902px;
  overflow: hidden;
}
.plist-vs {
  width: 16px;
  background: #f0f0f0;
  display: flex;
  flex-direction: column;
  align-items: center;
  gap: 4px;
  padding-top: 5px;
}
.pdata {
  height: 21px;
  border-bottom: 1px solid #e8e8e8;
  font-weight: 700;
}
.psliver {
  height: 2px;
}
.pc.rh { background: #e8e8e8; }
.yel { background: #ffff80; }
.grn { background: #80ff80; }
.navy { color: #000080; }
.line-r { border-right: 1px solid #7080a0; }
.cur .yel { background: #e8e888; }
.cur .grn { background: #88e088; }
.pc.focus {
  background: #f8f8a8;
  border: 1px solid #808080;
}
.st {
  justify-content: center;
  padding: 0;
  font-weight: 400;
}
.st:nth-child(n+11) { border-right-color: transparent; }
.cur .st { border-right-color: #e8e8e8; font-weight: 400; }
.s-g2 { background: #30d030; }
.s-g { background: #50c050; }
.s-r { background: #e03838; }
.s-e { background: #e8e8e8; }
.t-y { background: #e8e830; }
.t-o { background: #e08830; }
.t-k { background: #a8a868; }
.t-s { background: #b0b0b0; }
.t-m { background: #e08858; }
.t-b { background: #8888e0; color: #e8e8ff; }
.t-u { background: #30b030; }
.hscroll {
  display: flex;
  align-items: center;
  background: #f0f0f0;
  height: 17px;
}
.plist-hs {
  height: 15px;
  margin-top: 1px;
  padding: 0 4px;
}
.sico {
  width: 10px;
  height: 10px;
  flex: none;
}
.sico.dim { opacity: .35; }
.track {
  flex: 1;
  height: 100%;
  display: flex;
  margin: 0 4px;
}
.thumb {
  background: #c8c8c8;
  height: 100%;
}
.th-p { width: 1301px; }
.th-t { width: 99px; margin-left: 2px; }
.th-i { width: 707px; }
.th-d { width: 410px; }
.gap-strip {
  height: 8px;
  flex: none;
  background: #f0f0f0;
}

/* Arbeitsbereich */
.workspace {
  height: 803px;
  flex: none;
  display: flex;
  border-top: 1px solid #a0a0a0;
  border-bottom: 2px solid #a0a0a0;
  background: #f0f0f0;
}
.content {
  width: 1758px;
  flex: none;
  padding-top: 10px;
}
.tagbar {
  display: flex;
  align-items: center;
  height: 22px;
  padding-left: 12px;
}
.tags { display: flex; }
.tags.g1 { gap: 1px; }
.m3 { margin-left: 3px; }
.m4 { margin-left: 4px; }
.m5 { margin-left: 5px; }
.m7 { margin-left: 7px; }
.tag {
  width: 25px;
  height: 22px;
  border: 1px solid #8c8c8c;
  background: #fff;
  display: flex;
  align-items: center;
  justify-content: center;
}
.c-g { background: #30d030; }
.c-r { background: #ff0000; }
.c-y { background: #ffff00; }
.c-o { background: #ff8000; }
.c-k { background: #b0b060; }
.c-s { background: #c0c0c0; }
.c-m { background: #ff8040; }
.c-b { background: #8080ff; color: #e8e8ff; }
.c-u { background: #00c000; }
.proj-title {
  margin-left: 7px;
  font: 700 11px "Liberation Sans", sans-serif;
}

.tabs {
  display: grid;
  grid-template-columns: 37px 73px 38px 61px 90px 74px 37px 46px 93px 51px 54px 86px 45px 39px 55px 41px 90px 60px 61px 37px 87px 45px 40px 64px 95px 75px 136px;
  height: 23px;
  margin: 2px 0 0 5px;
  font: 11px "Liberation Sans", sans-serif;
}
.tab {
  display: flex;
  align-items: center;
  gap: 3px;
  margin-top: 2px;
  padding-left: 4px;
  white-space: nowrap;
  overflow: hidden;
  background: #f0f0f0;
  border-top: 1px solid #e0e0e0;
  border-right: 1px solid #e0e0e0;
}
.tab:first-child { border-left: 1px solid #e0e0e0; }
.tab.active {
  margin-top: 0;
  margin-bottom: -1px;
  background: #fff;
  position: relative;
  z-index: 1;
  padding-left: 5px;
  padding-bottom: 3px;
}
.tab-icon { padding-left: 3px; }

.tabpane {
  width: 1756px;
  height: 744px;
  margin-left: 2px;
  border: 1px solid #a0a0a0;
  background: #fff;
  padding: 3px 1px 4px 5px;
  font: 11px "Liberation Sans", sans-serif;
}
.page {
  height: 100%;
  border: 1px solid #c0c0c0;
  padding: 0 3px 2px 3px;
  display: flex;
  flex-direction: column;
}
.entry-row {
  height: 37px;
  flex: none;
  display: flex;
  align-items: center;
  padding: 0 0 2px 13px;
}
.inner {
  flex: 1;
  border: 1px solid #a8a8a8;
}

/* Felder */
.lb {
  display: block;
  white-space: nowrap;
  flex: none;
}
.tf {
  height: 100%;
  border: 1px solid #7a7a7a;
  background: #fff;
  display: flex;
  align-items: center;
  padding: 0 3px;
  white-space: nowrap;
  overflow: hidden;
  flex: none;
}
.tf.right { justify-content: flex-end; padding-right: 2px; }
.tf.top { align-items: flex-start; padding-top: 2px; }
.sel {
  height: 100%;
  border: 1px solid #adadad;
  background: #e1e1e1;
  display: flex;
  align-items: center;
  justify-content: space-between;
  padding: 0 4px 0 3px;
  white-space: nowrap;
  overflow: hidden;
  flex: none;
}
.focus-sel {
  background: #e5f1fb;
  border-color: #0078d7;
}
.entry-row .tf, .entry-row .sel { height: 22px; }

.w-34 { width: 34px; }
.w-37 { width: 37px; }
.w-38 { width: 38px; }
.w-51 { width: 51px; }
.w-54 { width: 54px; }
.w-56 { width: 56px; }
.w-59 { width: 59px; }
.w-65 { width: 65px; }
.w-66 { width: 66px; }
.w-70 { width: 70px; }
.w-71 { width: 71px; }
.w-93 { width: 93px; }
.w-108 { width: 108px; }
.w-118 { width: 118px; }
.w-131 { width: 131px; }
.w-132 { width: 132px; }
.w-153 { width: 153px; }
.w-188 { width: 188px; }
.w-205 { width: 205px; }
.w-206 { width: 206px; }
.w-224 { width: 224px; }
.w-257 { width: 257px; }
.w-463 { width: 463px; }
.w-465 { width: 465px; }
.w-481 { width: 481px; }
.ml-2 { margin-left: 2px; }
.ml-3 { margin-left: 3px; }
.ml-4 { margin-left: 4px; }
.ml-5 { margin-left: 5px; }
.ml-6 { margin-left: 6px; }
.ml-7 { margin-left: 7px; }
.ml-8 { margin-left: 8px; }
.ml-10 { margin-left: 10px; }
.ml-12 { margin-left: 12px; }
.ml-20 { margin-left: 20px; }
.ml-21 { margin-left: 21px; }

/* Formular oben */
.top-form {
  height: 264px;
  display: flex;
  padding-top: 12px;
}
.col-left {
  width: 591px;
  padding-left: 12px;
  flex: none;
}
.frow {
  display: flex;
  align-items: center;
  margin-bottom: 4px;
}
.h21 { height: 21px; }
.h22 { height: 22px; }
.h23 { height: 23px; }
.h24 { height: 24px; }
.h114 { height: 114px; }
.mt-5 { margin-top: 5px; }
.notiz { align-items: flex-start; }
.pencil-top { margin-top: 6px; }
.notiz .lb { margin-top: 3px; }
.area {
  justify-content: flex-end;
  padding: 2px 3px;
}
.area-vs {
  width: 13px;
  height: 100%;
  background: #f0f0f0;
  display: flex;
  flex-direction: column;
  justify-content: space-between;
  align-items: center;
  padding: 6px 0;
}

.col-right { width: 660px; }
.wx-row { display: flex; height: 48px; }
.wx-grid {
  display: grid;
  grid-template-columns: 70px 186px 49px;
  grid-template-rows: 22px 22px 2px;
  row-gap: 1px;
  column-gap: 1px;
  align-items: center;
}
.wx-grid .lb, .climate .lb { padding-bottom: 4px; }
.wx-box {
  grid-column: 3;
  grid-row: 1 / 4;
  align-self: stretch;
  background: #a0a0a0;
}
.climate {
  margin: -1px 0 0 57px;
  display: grid;
  grid-template-columns: 79px 34px 79px 34px auto;
  grid-template-rows: 24px 23px;
  align-items: center;
}
.climate span { padding-left: 3px; }

.anw-row {
  display: flex;
  margin-top: 5px;
  height: 114px;
}
.anw-label { margin-top: 4px; }
.dg {
  border: 1px solid #808080;
  background: #fff;
  display: grid;
  grid-template-columns: 1fr 16px;
  grid-template-rows: 25px 1fr 17px;
}
.dg-head {
  grid-column: 1 / 3;
  display: grid;
  align-items: center;
}
.hc {
  height: 23px;
  display: flex;
  align-items: center;
  gap: 7px;
  padding-left: 6px;
  border-right: 1px solid #e8e8e8;
  white-space: nowrap;
  overflow: hidden;
}
.hc:first-child { padding-left: 2px; }
.hc-tight { letter-spacing: -.2px; border-right: 0; }
.dg-body { min-width: 0; overflow: hidden; }
.vscroll {
  background: #f0f0f0;
  display: flex;
  flex-direction: column;
  align-items: center;
  justify-content: space-between;
  padding: 3px 0;
  overflow: hidden;
}
.vthumb {
  width: 14px;
  height: 17px;
  background: #c8c8c8;
}
.vspace { height: 14px; }
.corner {
  background: #f0f0f0;
  display: flex;
  align-items: center;
  justify-content: center;
}
.dg-anw { width: 559px; height: 114px; }
.hd-anw { grid-template-columns: 158px 217px 159px 1fr; }
.dg .hscroll { padding: 0 4px; }
.side-icons {
  display: flex;
  flex-direction: column;
  flex: none;
  align-items: flex-start;
}
.si-anw {
  margin-left: 7px;
  padding-top: 4px;
  gap: 11px;
}
.site-grid {
  margin-top: 7px;
  display: grid;
  grid-template-columns: 71px 232px 30px 68px 232px;
  grid-auto-rows: 22px;
  row-gap: 4px;
  align-items: center;
}
.site-grid .lb { padding-bottom: 2px; }

.splitter {
  height: 4px;
  background: #a0a0a0;
  margin-bottom: 3px;
}

/* Unterer Bereich */
.lower {
  display: flex;
  height: 334px;
  padding-left: 13px;
  margin-top: -1px;
}
.tree {
  width: 212px;
  flex: none;
  border: 1px solid #808080;
  border-right-width: 2px;
  display: flex;
  flex-direction: column;
  padding: 1px;
}
.tree-rows { flex: 1; overflow: hidden; }
.tr {
  height: 16px;
  display: flex;
  align-items: center;
  white-space: nowrap;
  overflow: hidden;
}
.l0 { padding-left: 5px; }
.l1 { padding-left: 17px; }
.l2 { padding-left: 22px; letter-spacing: -.12px; }
.tw {
  width: 10px;
  height: 10px;
  flex: none;
  margin-right: 3px;
}
.l0 > span, .l1 > span { margin-left: 5px; }
.l2 > span { margin-left: 5px; }
.vl {
  width: 12px;
  height: 16px;
  flex: none;
  border-left: 1px dotted #808080;
}
.no-vl .vl { border: 0; }
.hd {
  width: 8px;
  height: 8px;
  flex: none;
  align-self: flex-start;
  border-left: 1px dotted #808080;
}
.tr .tree-sel {
  display: flex;
  align-items: center;
  gap: 4px;
  background: #e0e0e0;
  height: 16px;
  margin-left: -2px;
  padding: 0 4px 0 2px;
}
.tree-hs { margin-top: 0; height: 15px; padding: 0 3px; }

.lower-main {
  width: 997px;
  flex: none;
}
.dg-items { height: 110px; border-width: 1px 1px 2px; }
.hd-items { grid-template-columns: 114px 77px 184px 143px 110px 23px 92px 164px 69px; }
.dg-items .dg-head { grid-template-columns: 114px 77px 184px 143px 110px 23px 92px 164px 85px; }
.item-row {
  display: grid;
  height: 21px;
  background: #bfdcf4;
}
.ic {
  display: flex;
  align-items: center;
  gap: 3px;
  padding-left: 3px;
  border-right: 1px solid #e8f0f8;
  white-space: nowrap;
  overflow: hidden;
}
.ic.mid { justify-content: center; padding: 0; }
.klasse {
  margin-left: 21px;
  border: 1px solid #0078d7;
  background: #cde0f2;
}
.si-items {
  margin-left: 6px;
  padding-top: 4px;
  gap: 6px;
}
.si-items .ico16 { margin-top: 1px; }

.detail {
  height: 221px;
  margin-top: 3px;
  border: 1px solid #a8a8a8;
  border-top-width: 2px;
  display: flex;
  padding: 3px 0 0 13px;
}
.detail-form {
  width: 372px;
  flex: none;
  display: grid;
  grid-template-columns: 95px 73px 60px 45px 65px 24px;
  grid-template-rows: 23px 28px 24px 24px 25px 25px 24px 24px;
  row-gap: 2px;
  align-items: center;
  align-content: start;
}
.detail-form .lb { padding-bottom: 6px; }
.span4 { grid-column: 2 / 6; }
.ic-col { margin-left: 7px; }
.pen-col { margin-left: 6px; }
.erledigt {
  grid-column: 2 / 6;
  height: 100%;
  display: flex;
  gap: 4px;
}
.erledigt .tf { width: 64px; }
.detail-right { flex: 1; min-width: 0; margin-top: -1px; }
.dr-row {
  display: flex;
  align-items: center;
  margin-bottom: 5px;
}
.dr-verteiler { margin-bottom: 6px; }
.dr-table {
  display: flex;
  height: 129px;
}
.dg-docs { width: 567px; height: 129px; }
.hd-docs { grid-template-columns: 82px 116px 128px 92px 25px 48px 1fr; }
.si-docs {
  margin-left: 6px;
  padding-top: 5px;
  gap: 16px;
}
.dr-buttons {
  display: flex;
  margin: 5px 0 0 185px;
  gap: 5px;
}
.btn {
  height: 19px;
  background: #e1e1e1;
  border: 1px solid #adadad;
  font: 11px "Liberation Sans", sans-serif;
}
.btn.w-108 { margin-left: 3px; }

/* Aktionen rechts */
.actions {
  flex: 1;
  border-left: 1px solid #a0a0a0;
  padding-top: 3px;
}
.act {
  height: 22px;
  display: flex;
  align-items: center;
  justify-content: center;
  position: relative;
  padding-right: 19px;
}
.tri {
  position: absolute;
  right: 6px;
  top: 8px;
  width: 7px;
  height: 5px;
}
.act-sep {
  border: 0;
  height: 2px;
  background: #a0a0a0;
  margin: 2px 5px 4px 4px;
}

/* Leisten unten */
.bottomnav {
  height: 26px;
  flex: none;
  display: flex;
  align-items: center;
  padding-left: 4px;
}
.bn {
  display: flex;
  align-items: center;
  gap: 3px;
  height: 21px;
  padding: 0 3px 0 1px;
}
.bn svg {
  width: 17px;
  height: 17px;
  flex: none;
}
.bn-on {
  width: 119px;
  margin-right: 3px;
  background: #cce4f7;
  border: 1px solid #99c9ef;
  padding-left: 4px;
}
.statusbar {
  height: 24px;
  flex: 1;
  background: #f0f0f0;
  border-top: 1px solid #e0e0e0;
  display: flex;
  padding-left: 19px;
}
.sb {
  width: 30px;
  border-left: 1px solid #d0d0d0;
  display: flex;
  align-items: center;
  justify-content: center;
}
.w-s20 { width: 20px; }
.w-s50 { width: 50px; }
```
